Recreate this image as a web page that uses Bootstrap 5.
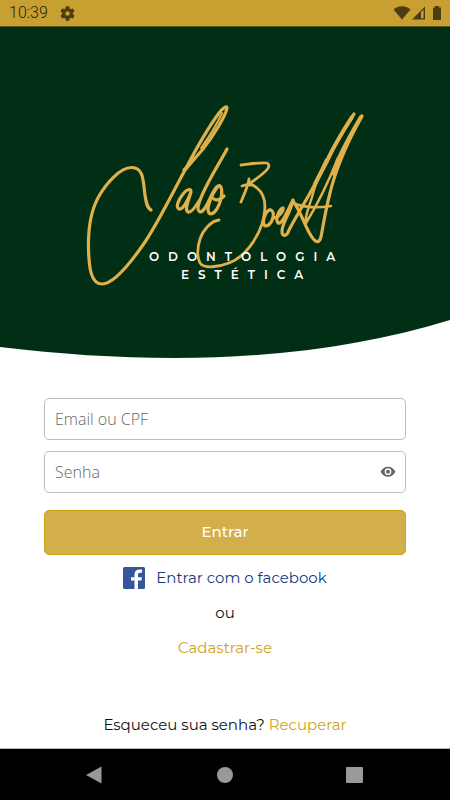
<!DOCTYPE html>
<html lang="pt-BR">
<head>
<meta charset="utf-8">
<meta name="viewport" content="width=device-width, initial-scale=1">
<title>Entrar</title>
<link href="https://cdn.jsdelivr.net/npm/bootstrap@5.3.0/dist/css/bootstrap.min.css" rel="stylesheet">
<style>
  body { font-family: Montserrat, Inter, sans-serif; font-size: 15px; line-height: 24px; color: #111; background: #fff; }
  a { text-decoration: none; }
  .status-bar { height: 27px; padding: 0 8px 0 9px; background: #c8a031; color: #4b3c12; border-bottom: 1px solid #5e5218; font-family: Roboto, sans-serif; font-size: 16px; }
  .status-time { color: #2b220a; font-weight: 300; }
  .hero { background: #002f15; padding-top: 68px; }
  .brand-logo { width: 290px; height: 195px; }
  .brand-logo text { font: 600 12px Montserrat, Inter, sans-serif; fill: #fff; letter-spacing: 9px; }
  .hero-curve { height: 40px; margin-top: 30px; }
  .login-area { padding: 38px 44px 11px; }
  .login-input { height: 42px; padding: 0 10px; border: 1px solid #bdbdbd; border-radius: 5px; font-family: "Open Sans", sans-serif; font-size: 16px; font-weight: 300; }
  .login-input::placeholder { color: #666; }
  .password-row { margin-top: 11px; }
  .eye-btn { right: 10px; color: #666; }
  .submit-btn { height: 45px; margin-top: 17px; background: #d2af4b; border: 1px solid #cfa512; border-radius: 5px; color: #fff; font-size: 15px; font-weight: 500; }
  .facebook-link { margin-top: 11px; gap: 11px; color: #17387f; }
  .gold-link { color: #d0a321; }
  .choice { margin-top: 11px; }
  .nav-keys { height: 52px; background: #000; padding: 0 86px 0 85px; border-top: 1px solid #b5b5b5; }
</style>
</head>
<body>
<div class="d-flex flex-column min-vh-100">
  <header class="status-bar d-flex align-items-center justify-content-between">
    <div class="d-flex align-items-center gap-2">
      <span class="status-time">10:39</span>
      <svg class="ms-1" width="15" height="15" viewBox="2 2 20 20" fill="currentColor" aria-hidden="true"><path d="M19.14 12.94c.04-.3.06-.61.06-.94s-.02-.64-.07-.94l2.03-1.58c.18-.14.23-.41.12-.61l-1.92-3.32c-.12-.22-.37-.29-.59-.22l-2.39.96c-.5-.38-1.03-.7-1.62-.94l-.36-2.54c-.04-.24-.24-.41-.48-.41h-3.84c-.24 0-.43.17-.47.41l-.36 2.54c-.59.24-1.13.57-1.62.94l-2.39-.96c-.22-.08-.47 0-.59.22L2.74 8.87c-.12.21-.08.47.12.61l2.03 1.58c-.05.3-.09.63-.09.94s.02.64.07.94l-2.03 1.58c-.18.14-.23.41-.12.61l1.92 3.32c.12.22.37.29.59.22l2.39-.96c.5.38 1.03.7 1.62.94l.36 2.54c.05.24.24.41.48.41h3.84c.24 0 .44-.17.47-.41l.36-2.54c.59-.24 1.13-.56 1.62-.94l2.39.96c.22.08.47 0 .59-.22l1.92-3.32c.12-.22.07-.47-.12-.61l-2.01-1.58zM12 15a3 3 0 1 1 0-6 3 3 0 0 1 0 6z"/></svg>
    </div>
    <svg width="49" height="16" viewBox="393 5 49 16" fill="currentColor" aria-hidden="true">
      <path d="M393.500 9.500C398 5 406 5 410.500 9.500L402 19.500z"/>
      <path fill-rule="evenodd" d="M412 19.500 425 6.500V19.500zM421 12V18.200H423.600V9.500z"/>
      <path d="M435 6h4v1.500h2V20h-8V7.500h2z"/>
    </svg>
  </header>

  <section class="hero d-flex flex-column align-items-center">
    <svg class="brand-logo" viewBox="80 95 290 195" role="img">
      <g fill="none" stroke="#e0b04a" stroke-width="3.200" stroke-linecap="round" stroke-linejoin="round">
        <path d="M151 210C147 208 146 202 145 195C143 181 144 168 132 167.500C120 167 106 184 99 196C91 210 88 230 88.500 249C89 268 91 284 102 284C114 284 132 261 145 242C159 221 172 194 185 170C196 149 208 128 219 113C223 108 227 105 227 108C226 115 214 135 203 149L185 170"/>
        <path d="M201 148C209 137 217 124 222 113" stroke-width="2"/>
        <path d="M184 170L187 167"/>
        <path d="M191 191C190 188 186 190 183 194C179 199 175 207 179 209C183 210 188 200 191 192C189 199 184 210 188 212C191 213 196 206 199 201"/>
        <path d="M227 149C218 166 205 185 199 203C196 213 201 214 205 208C210 200 214 187 218 186C222 184 223 193 220 202C217 211 212 216 209 213C206 209 211 195 218 186M214 199C217 201 221 199 224 196"/>
        <path d="M219 220C211 221 203 230 200 239C197 248 197 258 200 263C204 269 219 267 229 263C245 257 257 239 262 224C267 207 266 195 257 188C253 184 247 184 242 186M241 165C249 164 263 162 267 163C274 167 260 176 249 184M249 179C248 187 244 194 241 202" stroke-width="2.800"/>
        <path d="M264 225C262 219 267 209 271 210C276 213 272 226 265 226M273 218C278 218 284 211 283 208C279 209 275 219 278 223C282 225 287 212 293 200C291 212 282 223 282 231C282 238 287 236 289 230C295 218 306 201 315 184C327 159 338 138 354 114"/>
        <path d="M293 201C300 210 305 226 310 234C315 243 319 244 321 237C323 226 326 208 330 193C336 168 347 143 362 116"/>
        <path d="M338 158C330 178 319 202 306 223C304 218 309 207 312 197C315 184 320 173 326 160M293 203C304 208 317 208 331 206" stroke-width="2.500"/>
        <path d="M361 117C352 132 344 147 338 160L334 174M352 117C341 134 333 148 327 161L315 184" stroke-width="4"/>
      </g>
      <text x="149" y="261">ODONTOLOGIA</text>
      <text x="181" y="279">ESTÉTICA</text>
    </svg>
    <svg class="hero-curve w-100 d-block" viewBox="0 0 450 40" preserveAspectRatio="none" aria-hidden="true">
      <path fill="#fff" d="M0 27C60 34 115 38 175 38C275 38 370 25 450 0V40H0z"/>
    </svg>
  </section>

  <main class="login-area flex-grow-1 d-flex flex-column">
    <form>
      <input class="login-input form-control shadow-none" type="text" placeholder="Email ou CPF" aria-label="Email ou CPF">
      <div class="password-row position-relative">
        <input class="login-input form-control shadow-none" type="password" placeholder="Senha" aria-label="Senha">
        <button class="eye-btn btn p-0 border-0 position-absolute top-0 bottom-0 d-flex align-items-center" type="button" aria-label="Mostrar senha">
          <svg width="16" height="16" viewBox="0 0 24 24" fill="currentColor" aria-hidden="true"><path d="M12 4C7 4 2.730 7.110 1 11.500 2.730 15.890 7 19 12 19s9.270-3.110 11-7.500C21.270 7.110 17 4 12 4zm0 12.500a5 5 0 1 1 0-10 5 5 0 0 1 0 10zm0-8a3 3 0 1 0 0 6 3 3 0 0 0 0-6z"/></svg>
        </button>
      </div>
      <button class="submit-btn btn w-100 p-0" type="submit">Entrar</button>
    </form>
    <a class="facebook-link d-flex align-items-center justify-content-center" href="#">
      <svg width="22" height="22" viewBox="0 0 22 22" aria-hidden="true"><rect width="22" height="22" rx="1.500" fill="#36569b"/><path fill="#fff" d="M11.500 22V13.500H8V10.300H11.500V7.500C11.500 4.200 13.500 2.500 16.500 2.500H19V5.700H17C15.500 5.700 15 6.400 15 7.700V10.300H18.900L18.400 13.500H15V22z"/></svg>
      <span>Entrar com o facebook</span>
    </a>
    <div class="choice text-center">ou</div>
    <div class="choice text-center"><a class="gold-link" href="#">Cadastrar-se</a></div>
    <p class="mt-auto mb-0 text-center">Esqueceu sua senha? <a class="gold-link" href="#">Recuperar</a></p>
  </main>

  <footer class="nav-keys d-flex align-items-center justify-content-between">
    <svg width="18" height="18" viewBox="0 0 18 18" fill="#999" aria-hidden="true"><path d="M1 9 16.500 0.500V17.500z"/></svg>
    <svg width="18" height="18" viewBox="0 0 18 18" fill="#999" aria-hidden="true"><circle cx="9" cy="9" r="8"/></svg>
    <svg width="18" height="18" viewBox="0 0 18 18" fill="#999" aria-hidden="true"><rect x="0" y="1" width="17" height="16" rx="1"/></svg>
  </footer>
</div>
<script src="https://cdn.jsdelivr.net/npm/bootstrap@5.3.0/dist/js/bootstrap.bundle.min.js"></script>
</body>
</html>
